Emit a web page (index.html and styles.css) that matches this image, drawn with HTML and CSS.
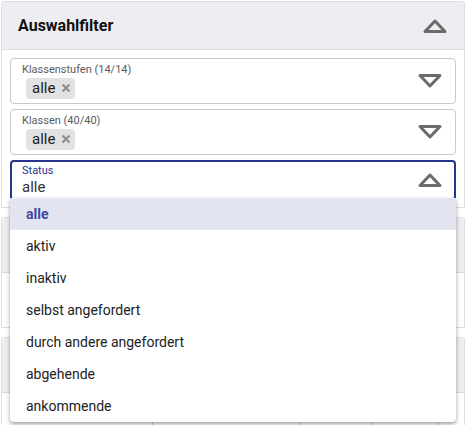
FILE: index.html
```html
<!DOCTYPE html>
<html lang="de">
<head>
<meta charset="utf-8">
<link rel="stylesheet" href="styles.css">
</head>
<body>
<div class="page">
  <section class="card">
    <header class="card-head">
      <h2 class="title">Auswahlfilter</h2>
      <svg class="tri tri-head" viewBox="0 0 26 16" width="26" height="16"><polygon points="3,13.5 23,13.5 13,3" /></svg>
    </header>
    <div class="card-body">
      <div class="field">
        <div class="field-main">
          <div class="label">Klassenstufen (14/14)</div>
          <span class="chip">alle<svg class="chip-x" viewBox="0 0 10 10" width="10" height="10"><path d="M1.5 1.5 L8.5 8.5 M8.5 1.5 L1.5 8.5" /></svg></span>
        </div>
        <svg class="tri" viewBox="0 0 26 16" width="26" height="16"><polygon points="3,2.5 23,2.5 13,13" /></svg>
      </div>
      <div class="field">
        <div class="field-main">
          <div class="label">Klassen (40/40)</div>
          <span class="chip">alle<svg class="chip-x" viewBox="0 0 10 10" width="10" height="10"><path d="M1.5 1.5 L8.5 8.5 M8.5 1.5 L1.5 8.5" /></svg></span>
        </div>
        <svg class="tri" viewBox="0 0 26 16" width="26" height="16"><polygon points="3,2.5 23,2.5 13,13" /></svg>
      </div>
      <div class="field field-focus">
        <div class="field-main">
          <div class="label label-focus">Status</div>
          <div class="value">alle</div>
        </div>
        <svg class="tri" viewBox="0 0 26 16" width="26" height="16"><polygon points="3,13.5 23,13.5 13,3" /></svg>
        <ul class="menu">
          <li class="item item-active">alle</li>
          <li class="item">aktiv</li>
          <li class="item">inaktiv</li>
          <li class="item">selbst angefordert</li>
          <li class="item">durch andere angefordert</li>
          <li class="item">abgehende</li>
          <li class="item">ankommende</li>
        </ul>
      </div>
    </div>
  </section>
  <section class="card card-bg">
    <div class="bg-head"></div>
    <div class="bg-body"></div>
  </section>
  <section class="card card-bg">
    <div class="bg-head"></div>
    <div class="bg-table">
      <span class="col c1"></span><span class="col c2"></span><span class="col c3"></span><span class="col c4"></span><span class="col c5"></span>
    </div>
  </section>
</div>
</body>
</html>
```
FILE: styles.css
```css
* { box-sizing: border-box; }
html, body { margin: 0; padding: 0; background: #fff; }
body {
  font-family: Roboto, "Noto Sans", "Liberation Sans", sans-serif;
  color: #212121;
  width: 466px;
  height: 425px;
  overflow: hidden;
}
.page {
  padding: 1px 1px 0 1px;
  display: flex;
  flex-direction: column;
  gap: 9px;
}
.card {
  border: 1px solid #dedede;
  border-radius: 3px 3px 0 0;
  background: #fff;
}
.card-head {
  height: 48px;
  background: #ededf2;
  border-bottom: 1px solid #dcdcdc;
  display: flex;
  align-items: center;
  justify-content: space-between;
  padding: 0 16px 0 16px;
}
.title {
  margin: 0;
  font-size: 16px;
  font-weight: 700;
  color: #111;
}
.tri { display: block; flex: none; }
.tri polygon {
  fill: none;
  stroke: #6b6b6b;
  stroke-width: 3;
  stroke-linejoin: round;
}
.tri-head { margin-top: 0; }
.card-body {
  padding: 8px 8px 6px 8px;
  display: flex;
  flex-direction: column;
  gap: 5px;
}
.field {
  position: relative;
  border: 1px solid #c9c9c9;
  border-radius: 4px;
  display: flex;
  align-items: center;
  justify-content: space-between;
  padding: 3px 12px 4px 11px;
  min-height: 46px;
}
.field-focus {
  border: 2px solid #27348b;
  padding: 2px 11px 3px 10px;
  min-height: 40px;
}
.field-main {
  display: flex;
  flex-direction: column;
  align-items: flex-start;
}
.label {
  font-size: 11px;
  line-height: 14px;
  color: #5c5c5c;
}
.label-focus { color: #27348b; }
.chip {
  margin: 1px 0 0 4px;
  background: #e2e2e2;
  border-radius: 4px;
  height: 21px;
  padding: 0 4px 0 6px;
  font-size: 15px;
  line-height: 21px;
  color: #222;
  display: inline-flex;
  align-items: center;
}
.chip-x {
  margin-left: 6px;
  display: block;
}
.chip-x path {
  stroke: #8f8f8f;
  stroke-width: 2.2;
  fill: none;
}
.value {
  font-size: 15px;
  line-height: 18px;
  color: #333;
}
.menu {
  position: absolute;
  left: -2px;
  right: -2px;
  top: 36px;
  margin: 0;
  padding: 0;
  list-style: none;
  background: #fff;
  border-radius: 0 0 4px 4px;
  box-shadow: 0 3px 5px rgba(0,0,0,0.25), 0 1px 3px rgba(0,0,0,0.15);
  z-index: 5;
  overflow: hidden;
}
.item {
  height: 32px;
  line-height: 32px;
  padding-left: 16px;
  font-size: 14px;
  color: #222;
}
.item-active {
  background: #e2e4f0;
  color: #3d4aa0;
  font-weight: 700;
}
.card-bg { border-radius: 3px 3px 0 0; }
.bg-head {
  height: 55px;
  background: #ededf2;
  border-bottom: 1px solid #dcdcdc;
}
.bg-body { height: 54px; }
.bg-table {
  height: 40px;
  display: flex;
  border-bottom: 1px solid #c8c8c8;
}
.col { display: block; height: 100%; border-right: 1px solid #d0d0d0; }
.c1 { width: 151px; }
.c2 { width: 148px; }
.c3 { width: 72px; }
.c4 { width: 66px; }
.c5 { flex: 1; border-right: none; }
```
